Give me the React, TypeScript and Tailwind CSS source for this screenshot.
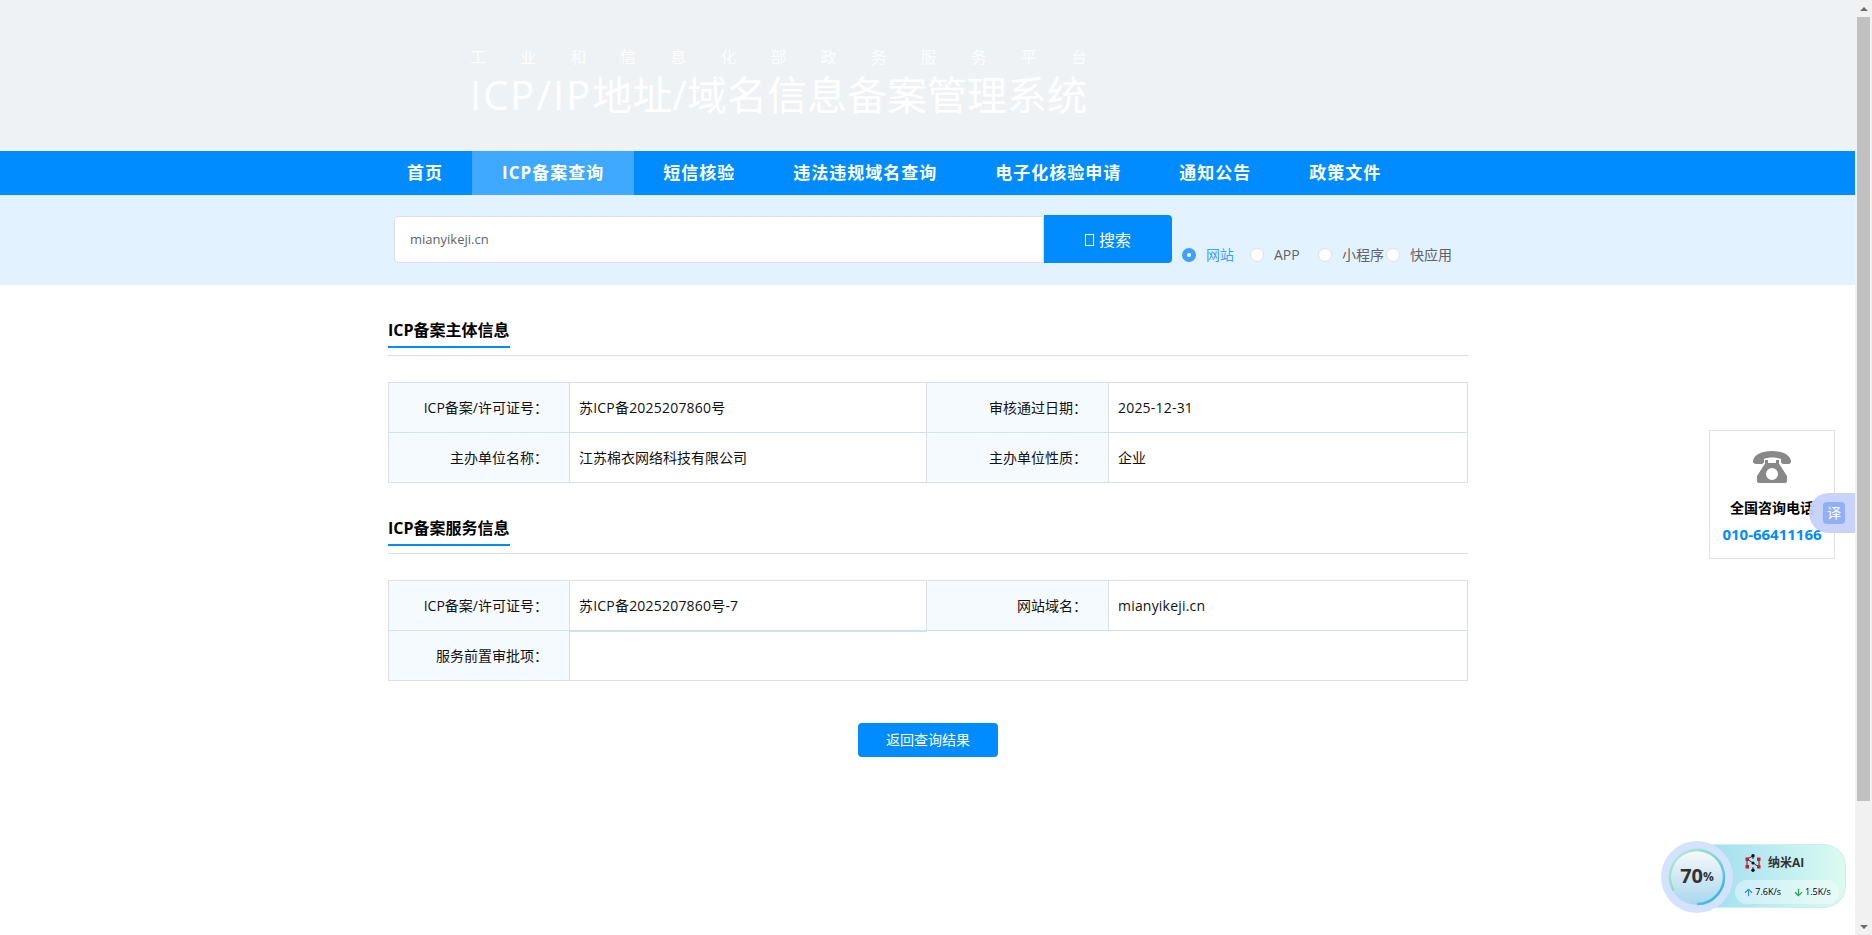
import { ArrowUp, ArrowDown } from 'lucide-react';

const NAV_ITEMS = ['首页', 'ICP备案查询', '短信核验', '违法违规域名查询', '电子化核验申请', '通知公告', '政策文件'];
const SEARCH_TYPES = ['网站', 'APP', '小程序', '快应用'];
const FONT = "font-['Open_Sans','Noto_Sans_CJK_SC',sans-serif]";

function SectionTitle({ title }: { title: string }) {
  return (
    <div className="border-b border-[#dcdfe6] h-[71px] flex items-end">
      <h2 className="w-[122px] h-[31px] mb-[7px] border-b-2 border-[#008cff] text-base font-bold text-black leading-[26px] whitespace-nowrap">
        {title}
      </h2>
    </div>
  );
}

function Label({ text, wide }: { text: string; wide?: boolean }) {
  return (
    <div
      className={`${wide ? 'w-[182px]' : 'w-[181px]'} shrink-0 bg-[#f5fafe] border-r border-[#dcdfe6] pr-[21px] flex items-center justify-end text-sm text-[#111]`}
    >
      {text}：
    </div>
  );
}

function Value({ text, divider, mark }: { text?: string; divider?: boolean; mark?: boolean }) {
  const latin = /[a-z0-9]/i.test(text ?? '');
  return (
    <div
      className={`${divider ? 'w-[357px] shrink-0 border-r border-[#dcdfe6]' : 'flex-1'} ${mark ? 'h-[51px] border-b-2 border-b-[#cfe0ef]' : ''} ${latin ? 'tracking-[0.2px]' : ''} pl-[9px] flex items-center text-sm text-[#111]`}
    >
      {text}
    </div>
  );
}

function PhoneIcon() {
  return (
    <svg width="38" height="32" viewBox="0 0 38 32" fill="#888888">
      <path d="M0 10.5C0 4 9 0 19 0s19 4 19 10.500c0 1.500-1 2.500-2.500 2.500h-5c-1.500 0-2.500-1-2.500-2.500V8c-2.500-1-6-1.500-9-1.500S13.500 7 11 8v2.500C11 12 10 13 8.500 13h-5C1 13 0 12 0 10.500z" />
      <path fillRule="evenodd" d="M12 9h3v3h8V9h3v3c0 1 .5 1.700 1.200 2.500L34 25v5c0 1-.8 2-2 2H6c-1.200 0-2-1-2-2v-5l6.800-10.500c.7-.8 1.200-1.500 1.200-2.500zM19 17a6 6 0 1 0 0 12 6 6 0 0 0 0-12z" />
    </svg>
  );
}

function NanoLogo() {
  return (
    <svg width="16" height="18" viewBox="0 0 16 18">
      <path d="M2 5l6-3M2 5l12 8M14 5v8M2 5v8M8 2v3M8 13v3" stroke="#333" strokeWidth="1" fill="none" />
      <rect x="0.500" y="3.500" width="3.500" height="3.500" fill="#e0102f" />
      <rect x="0.500" y="11" width="3.500" height="3.500" fill="#e0102f" />
      <rect x="12" y="3.500" width="3.500" height="3.500" fill="#e0102f" />
      <rect x="12" y="11" width="3.500" height="3.500" fill="#e0102f" />
      <circle cx="8" cy="1.800" r="1.700" fill="#111" />
      <circle cx="8" cy="9" r="1.500" fill="#111" />
      <circle cx="8" cy="16.200" r="1.700" fill="#111" />
    </svg>
  );
}

function SpeedWidget() {
  return (
    <div className="absolute left-[1661px] top-[840px] w-[186px] h-[74px] flex items-center">
      <div className="absolute left-[36px] top-[4px] w-[149px] h-[64px] rounded-r-[22px] bg-gradient-to-r from-[#9bdcf0] to-[#dcfbf0] border border-[#cdeef2] pl-[37px] pt-[8px]">
        <div className="flex items-center gap-[7px] pl-[10px] h-[20px] text-xs font-bold text-[#333]">
          <NanoLogo />
          <span>纳米AI</span>
        </div>
        <div className="mt-[7px] w-[104px] h-[24px] rounded-full bg-white/40 flex items-center justify-center gap-[12px] text-[9px] text-black whitespace-nowrap">
          <span className="flex items-center gap-[1px]"><ArrowUp size={11} strokeWidth={2.5} className="text-[#3b8cf0]" />7.6K/s</span>
          <span className="flex items-center gap-[1px]"><ArrowDown size={11} strokeWidth={2.5} className="text-[#18b048]" />1.5K/s</span>
        </div>
      </div>
      <div className="relative w-[72px] h-[72px] rounded-full bg-[#d4e3fd] flex items-center justify-center">
        <div className="w-[56px] h-[56px] rounded-full bg-gradient-to-b from-[#fafafa] to-[#a8d6ee] flex items-center justify-center font-bold text-[#333] pb-[3px]">
          <span className="text-[20px] leading-none">70</span>
          <span className="text-xs leading-none mt-[3px]">%</span>
        </div>
        <svg className="absolute left-[7px] top-[7px]" width="58" height="58" viewBox="0 0 58 58" fill="none">
          <defs>
            <linearGradient id="ring" x1="1" y1="1" x2="0" y2="0">
              <stop offset="0" stopColor="#20a5ee" />
              <stop offset="0.3" stopColor="#5cc8dc" />
              <stop offset="0.6" stopColor="#8fdcc6" />
              <stop offset="1" stopColor="#b8ecd8" />
            </linearGradient>
          </defs>
          <path d="M29 56A27 27 0 1 0 5.600 42.500" stroke="url(#ring)" strokeWidth="2.500" />
        </svg>
      </div>
    </div>
  );
}

function PhoneCard() {
  return (
    <div className="absolute left-[1709px] top-[430px] w-[126px] h-[129px] bg-white border border-[#dfe0ea] flex flex-col items-center pt-[20px]">
      <PhoneIcon />
      <div className="mt-[15px] text-sm leading-[20px] font-bold text-black whitespace-nowrap">全国咨询电话</div>
      <div className="mt-[5px] text-[15px] leading-[22px] font-bold text-[#008cff] whitespace-nowrap">010-66411166</div>
    </div>
  );
}

function TranslateTab() {
  return (
    <div className="absolute left-[1809px] top-[493px] w-[46px] h-[40px] rounded-l-[20px] bg-[#c5d1fb]/95 flex items-center pl-[14px]">
      <div className="w-[22px] h-[22px] rounded-[4px] bg-[#8fb0f8] text-white text-sm flex items-center justify-center">译</div>
    </div>
  );
}

function Scrollbar() {
  return (
    <div className="w-[17px] h-full shrink-0 bg-[#f1f1f1] flex flex-col items-center">
      <div className="h-[17px] flex items-center justify-center">
        <div className="w-0 h-0 border-x-[4px] border-x-transparent border-b-[4px] border-b-[#6b6b6b]" />
      </div>
      <div className="w-[13px] h-[784px] bg-[#c1c1c1]" />
      <div className="mt-auto h-[17px] flex items-center justify-center">
        <div className="w-0 h-0 border-x-[4px] border-x-transparent border-t-[4px] border-t-[#6b6b6b]" />
      </div>
    </div>
  );
}

export default function App() {
  return (
    <div className={`relative flex w-full h-screen overflow-hidden bg-white ${FONT}`}>
      <div className="flex-1 min-w-0">
        {/* Header */}
        <header className="h-[151px] bg-[#eef2f5] pl-[470px] pt-[46px] text-white">
          <div className="w-[617px] flex justify-between text-base leading-[22px] opacity-90">
            {'工业和信息化部政务服务平台'.split('').map((c, i) => (
              <span key={i}>{c}</span>
            ))}
          </div>
          <div className="text-[40px] leading-[48px] mt-[3px] whitespace-nowrap">
            <span className="tracking-[2px]">ICP/IP</span>地址/域名信息备案管理系统
          </div>
        </header>

        {/* Nav */}
        <nav className="h-[44px] bg-[#008cff] pl-[378px] flex">
          {NAV_ITEMS.map((item, i) => (
            <a
              key={item}
              className={`flex items-center text-[17px] font-bold text-white tracking-[1px] whitespace-nowrap ${i === 1 ? 'px-[30px] bg-[#3fa9ff]' : 'px-[29px]'}`}
            >
              {item}
            </a>
          ))}
        </nav>

        {/* Search */}
        <div className="h-[90px] bg-[#e3f2ff] pl-[394px] pt-[20px] flex items-start">
          <div className="w-[650px] h-[47px] mt-[1px] bg-white border border-[#dcdfe6] rounded-l-[4px] pl-[15px] pt-[1px] flex items-center text-[13px] text-[#606266]">
            mianyikeji.cn
          </div>
          <button className="w-[128px] h-[48px] bg-[#008cff] rounded-r-[4px] pt-[1px] text-white text-base flex items-center justify-center gap-[5px]">
            <span className="inline-block w-[9px] h-[12px] border border-white" />
            搜索
          </button>
          <div className="flex ml-[10px] mt-[33px]">
            {SEARCH_TYPES.map((type, i) => (
              <label key={type} className="w-[68px] h-[14px] flex items-center gap-[10px] text-sm whitespace-nowrap">
                {i === 0 ? (
                  <span className="w-[14px] h-[14px] shrink-0 rounded-full bg-[#409eff] flex items-center justify-center">
                    <span className="w-[4px] h-[4px] rounded-full bg-white" />
                  </span>
                ) : (
                  <span className="w-[14px] h-[14px] shrink-0 rounded-full bg-white border border-[#dcdfe6]" />
                )}
                <span className={i === 0 ? 'text-[#409eff]' : 'text-[#606266]'}>{type}</span>
              </label>
            ))}
          </div>
        </div>

        {/* Detail */}
        <main className="w-[1080px] ml-[388px]">
          <SectionTitle title="ICP备案主体信息" />
          <div className="mt-[26px] border border-[#dcdfe6]">
            <div className="h-[50px] flex border-b border-[#cfe0ef]">
              <Label text="ICP备案/许可证号" />
              <Value text="苏ICP备2025207860号" divider />
              <Label text="审核通过日期" wide />
              <Value text="2025-12-31" />
            </div>
            <div className="h-[49px] flex">
              <Label text="主办单位名称" />
              <Value text="江苏棉衣网络科技有限公司" divider />
              <Label text="主办单位性质" wide />
              <Value text="企业" />
            </div>
          </div>

          <SectionTitle title="ICP备案服务信息" />
          <div className="mt-[26px] border border-[#dcdfe6]">
            <div className="h-[50px] flex border-b border-[#cfe0ef]">
              <Label text="ICP备案/许可证号" />
              <Value text="苏ICP备2025207860号-7" divider mark />
              <Label text="网站域名" wide />
              <Value text="mianyikeji.cn" />
            </div>
            <div className="h-[49px] flex">
              <Label text="服务前置审批项" />
              <Value />
            </div>
          </div>

          <div className="mt-[42px] flex justify-center">
            <button className="w-[140px] h-[34px] bg-[#008cff] rounded-[4px] text-white text-sm">返回查询结果</button>
          </div>
        </main>
      </div>
      <Scrollbar />
      <PhoneCard />
      <TranslateTab />
      <SpeedWidget />
    </div>
  );
}
